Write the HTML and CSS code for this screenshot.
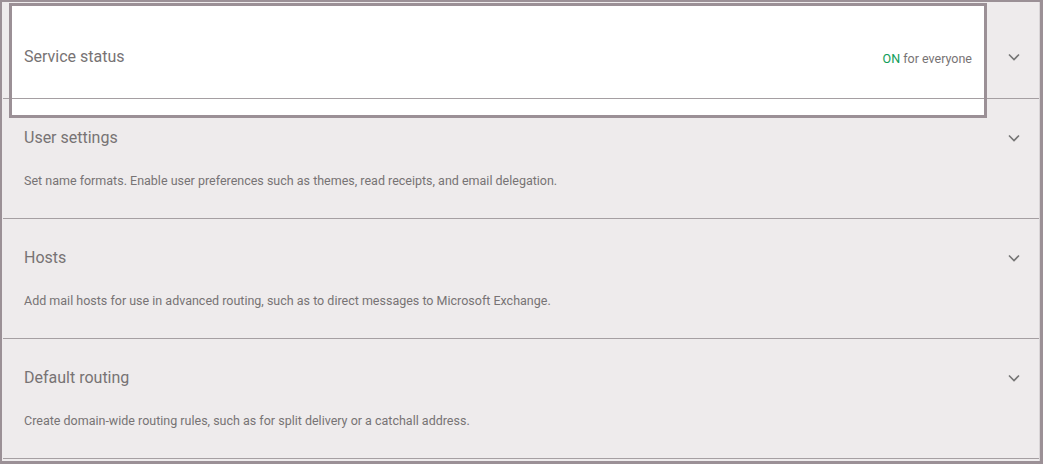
FILE: index.html
```html
<!DOCTYPE html>
<html lang="en">
<head>
    <meta charset="UTF-8">
    <title>Gmail settings</title>
    <link rel="stylesheet" href="styles.css">
</head>
<body>
    <div class="page">
        <div class="focus-fill"></div>
        <div class="focus-ring"></div>

        <div class="section section-status">
            <div class="row">
                <div class="title">Service status</div>
                <div class="status"><span class="on">ON</span> for everyone</div>
                <div class="chevron">
                    <svg width="12" height="8" viewBox="0 0 12 8"><path d="M1 1.5l5 5 5-5" fill="none" stroke="#757575" stroke-width="1.6"/></svg>
                </div>
            </div>
        </div>

        <div class="section">
            <div class="row">
                <div class="title">User settings</div>
                <div class="chevron">
                    <svg width="12" height="8" viewBox="0 0 12 8"><path d="M1 1.5l5 5 5-5" fill="none" stroke="#757575" stroke-width="1.6"/></svg>
                </div>
            </div>
            <div class="desc">Set name formats. Enable user preferences such as themes, read receipts, and email delegation.</div>
        </div>

        <div class="section">
            <div class="row">
                <div class="title">Hosts</div>
                <div class="chevron">
                    <svg width="12" height="8" viewBox="0 0 12 8"><path d="M1 1.5l5 5 5-5" fill="none" stroke="#757575" stroke-width="1.6"/></svg>
                </div>
            </div>
            <div class="desc">Add mail hosts for use in advanced routing, such as to direct messages to Microsoft Exchange.</div>
        </div>

        <div class="section">
            <div class="row">
                <div class="title">Default routing</div>
                <div class="chevron">
                    <svg width="12" height="8" viewBox="0 0 12 8"><path d="M1 1.5l5 5 5-5" fill="none" stroke="#757575" stroke-width="1.6"/></svg>
                </div>
            </div>
            <div class="desc">Create domain-wide routing rules, such as for split delivery or a catchall address.</div>
        </div>
    </div>
</body>
</html>
```

FILE: styles.css
```css
* {
    margin: 0;
    padding: 0;
    box-sizing: border-box;
}

html, body {
    height: 100%;
}

body {
    background: #9b9096;
    font-family: Roboto, "Liberation Sans", sans-serif;
    color: #777374;
    padding: 2px 3px 3px 2px;
}

.page {
    position: relative;
    height: 100%;
    background: #eeebec;
    border-right: 1px solid #d9d5d7;
}

/* white highlight behind the first row, ring drawn on top */
.focus-fill {
    position: absolute;
    left: 7px;
    top: 1px;
    width: 978px;
    height: 115px;
    background: #ffffff;
    z-index: 0;
}

.focus-ring {
    position: absolute;
    left: 7px;
    top: 1px;
    width: 978px;
    height: 115px;
    border: 3px solid #9b9096;
    z-index: 2;
}

.section {
    position: relative;
    z-index: 1;
    margin-left: 1px;
    height: 120px;
    padding: 29px 13px 0 21px;
    border-bottom: 1px solid #a59fa2;
}

.section-status {
    height: 97px;
    padding-top: 14px;
    display: flex;
    align-items: center;
}

.section-status .row {
    flex: 1;
}

.row {
    display: flex;
    align-items: center;
    height: 20px;
}

.title {
    flex: 1;
    font-size: 16px;
    line-height: 20px;
}

.status {
    font-size: 12.5px;
    line-height: 16px;
    margin-top: 4px;
}

.status .on {
    color: #0f9d58;
}

.chevron {
    width: 24px;
    height: 20px;
    margin-left: 30px;
    display: flex;
    align-items: center;
    justify-content: center;
}

.desc {
    margin-top: 25px;
    font-size: 12.5px;
    line-height: 16px;
}
```
